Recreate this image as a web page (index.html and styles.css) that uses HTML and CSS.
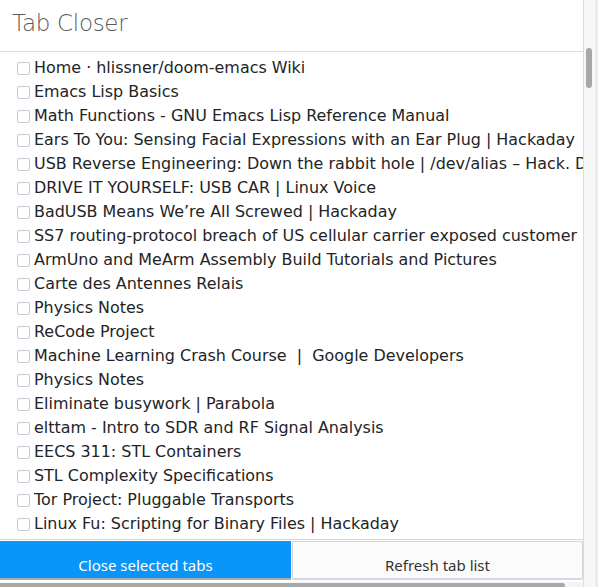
FILE: index.html
```html
<!DOCTYPE html>
<html>
<head>
<meta charset="utf-8">
<link rel="stylesheet" href="styles.css">
</head>
<body>
<div class="page">
  <div class="main">
    <header class="header">Tab Closer</header>
    <ul class="list">
      <li class="row"><span class="box"></span><span class="title">Home · hlissner/doom-emacs Wiki</span></li>
      <li class="row"><span class="box"></span><span class="title">Emacs Lisp Basics</span></li>
      <li class="row"><span class="box"></span><span class="title">Math Functions - GNU Emacs Lisp Reference Manual</span></li>
      <li class="row"><span class="box"></span><span class="title">Ears To You: Sensing Facial Expressions with an Ear Plug | Hackaday</span></li>
      <li class="row"><span class="box"></span><span class="title">USB Reverse Engineering: Down the rabbit hole | /dev/alias – Hack. Design</span></li>
      <li class="row"><span class="box"></span><span class="title">DRIVE IT YOURSELF: USB CAR | Linux Voice</span></li>
      <li class="row"><span class="box"></span><span class="title">BadUSB Means We’re All Screwed | Hackaday</span></li>
      <li class="row"><span class="box"></span><span class="title">SS7 routing-protocol breach of US cellular carrier exposed customer</span></li>
      <li class="row"><span class="box"></span><span class="title">ArmUno and MeArm Assembly Build Tutorials and Pictures</span></li>
      <li class="row"><span class="box"></span><span class="title">Carte des Antennes Relais</span></li>
      <li class="row"><span class="box"></span><span class="title">Physics Notes</span></li>
      <li class="row"><span class="box"></span><span class="title">ReCode Project</span></li>
      <li class="row"><span class="box"></span><span class="title">Machine Learning Crash Course &nbsp;|&nbsp; Google Developers</span></li>
      <li class="row"><span class="box"></span><span class="title">Physics Notes</span></li>
      <li class="row"><span class="box"></span><span class="title">Eliminate busywork | Parabola</span></li>
      <li class="row"><span class="box"></span><span class="title">elttam - Intro to SDR and RF Signal Analysis</span></li>
      <li class="row"><span class="box"></span><span class="title">EECS 311: STL Containers</span></li>
      <li class="row"><span class="box"></span><span class="title">STL Complexity Specifications</span></li>
      <li class="row"><span class="box"></span><span class="title">Tor Project: Pluggable Transports</span></li>
      <li class="row"><span class="box"></span><span class="title">Linux Fu: Scripting for Binary Files | Hackaday</span></li>
    </ul>
    <footer class="footer">
      <button class="btn btn-primary">Close selected tabs</button>
      <button class="btn btn-default">Refresh tab list</button>
    </footer>
    <div class="hscroll"><div class="hthumb"></div></div>
  </div>
  <div class="vscroll"><div class="vthumb"></div></div>
</div>
</body>
</html>
```
FILE: styles.css
```css
html, body {
  margin: 0;
  padding: 0;
  background: #ffffff;
}
body {
  width: 598px;
  height: 587px;
  overflow: hidden;
  font-family: "DejaVu Sans", sans-serif;
  color: #222426;
}
.page {
  display: flex;
  width: 598px;
  height: 587px;
}
.main {
  width: 583px;
  display: flex;
  flex-direction: column;
  overflow: hidden;
}
.header {
  height: 52px;
  box-sizing: border-box;
  border-bottom: 1px solid #dcdcdc;
  padding: 8px 0 0 12px;
  font-family: "DejaVu Sans", sans-serif;
  font-weight: 200;
  font-size: 23px;
  letter-spacing: -0.3px;
  color: #5a5a5a;
  line-height: 30px;
  flex: none;
}
.list {
  list-style: none;
  margin: 0;
  padding: 4px 0 0 0;
  flex: none;
  height: 487px;
  box-sizing: border-box;
  overflow: hidden;
}
.row {
  height: 24px;
  display: flex;
  align-items: center;
  padding-left: 16px;
  white-space: nowrap;
  font-size: 15.95px;
  color: #222426;
}
.box {
  width: 13px;
  height: 13px;
  box-sizing: border-box;
  border: 1px solid #c6cad3;
  border-radius: 2px;
  background: #fff;
  flex: none;
  margin-right: 4px;
  margin-left: 1px;
}
.title {
  line-height: 24px;
}
.footer {
  flex: none;
  height: 42px;
  box-sizing: border-box;
  border-top: 1px solid #d7d7db;
  display: flex;
  padding-top: 1px;
}
.btn {
  flex: 1;
  margin: 0;
  height: 39px;
  font-family: "Noto Sans", "Open Sans", sans-serif;
  font-size: 15px;
  padding: 9px 0 0 0;
  border-radius: 0;
  cursor: default;
}
.btn-primary {
  background: #0996f8;
  color: #ffffff;
  border: none;
  border-top: 2px solid #0996f8;
  border-bottom: 2px solid #a8aab0;
  width: 291px;
  flex: none;
}
.btn-default {
  background: #fbfbfb;
  color: #333333;
  border: 1px solid #d4d6dc;
  border-bottom: 2px solid #d4d6e4;
  border-radius: 2px;
  margin-left: 1px;
}
.hscroll {
  flex: none;
  height: 5px;
  margin-top: 1px;
  background: #f4f4f4;
  position: relative;
}
.hthumb {
  position: absolute;
  left: 0;
  top: 1px;
  height: 5px;
  width: 565px;
  background: #a9a9a9;
  border-radius: 0 3px 3px 0;
}
.vscroll {
  width: 15px;
  flex: none;
  box-sizing: border-box;
  border-left: 1px solid #dcdcdc;
  border-right: 3px solid #ececec;
  background: #f7f7f7;
  position: relative;
}
.vthumb {
  position: absolute;
  left: 2px;
  top: 48px;
  width: 6px;
  height: 40px;
  border-radius: 3px;
  background: #a8a8a8;
}
```
